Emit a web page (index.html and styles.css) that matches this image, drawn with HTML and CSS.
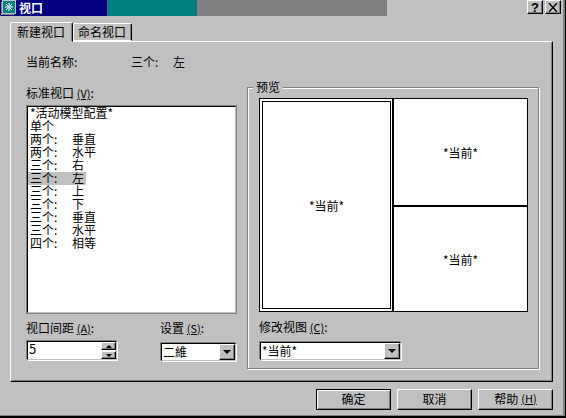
FILE: index.html
```html
<!DOCTYPE html>
<html lang="zh">
<head>
    <meta charset="UTF-8">
    <title>视口</title>
    <link rel="stylesheet" href="styles.css">
</head>
<body>
    <div id="dialog">
        <div class="titlebar">
            <div class="caption">
                <svg class="app-icon" width="16" height="16" viewBox="0 0 16 16">
                    <rect x="2.500" y="0.500" width="13" height="13" fill="#008080" stroke="#c0c0c0"/>
                    <path d="M1 2h1v12h12v1H1z" fill="#808080"/>
                    <path d="M9 3v8M5 7h8M6 4l2 2M12 4l-2 2M6 10l2-2M12 10l-2-2" stroke="#fff" fill="none"/>
                </svg>
                <span>视口</span>
            </div>
            <div class="band-teal"></div>
            <div class="band-grey"></div>
            <div class="sys-buttons">
                <div class="sys-btn">?</div>
                <div class="sys-btn">
                    <svg width="10" height="9" viewBox="0 0 10 9"><path d="M1 0l8 9M9 0L1 9" stroke="#000" stroke-width="1.300" fill="none"/></svg>
                </div>
            </div>
        </div>

        <div class="tabs">
            <div class="tab active">新建视口</div>
            <div class="tab">命名视口</div>
        </div>

        <div class="panel">
            <div class="name-row">
                <span class="name-label">当前名称:</span>
                <span class="k">三个:</span><span>左</span>
            </div>
            <div class="columns">
                <div class="left-col">
                    <div class="field-label">标准视口 <u>(V)</u>:</div>
                    <ul class="listbox">
                        <li>*活动模型配置*</li>
                        <li>单个</li>
                        <li><span class="k">两个:</span>垂直</li>
                        <li><span class="k">两个:</span>水平</li>
                        <li><span class="k">三个:</span>右</li>
                        <li class="selected"><span class="k">三个:</span>左</li>
                        <li><span class="k">三个:</span>上</li>
                        <li><span class="k">三个:</span>下</li>
                        <li><span class="k">三个:</span>垂直</li>
                        <li><span class="k">三个:</span>水平</li>
                        <li><span class="k">四个:</span>相等</li>
                    </ul>
                    <div class="bottom-fields">
                        <div class="spacing-field">
                            <div class="field-label">视口间距 <u>(A)</u>:</div>
                            <div class="spinner">
                                <span class="value">5</span>
                                <div class="spin-btns">
                                    <div class="spin-btn"><i class="arrow-up"></i></div>
                                    <div class="spin-btn"><i class="arrow-down"></i></div>
                                </div>
                            </div>
                        </div>
                        <div class="setting-field">
                            <div class="field-label">设置 <u>(S)</u>:</div>
                            <div class="combo combo-small">
                                <span class="value">二維</span>
                                <div class="drop-btn"><i class="arrow-big"></i></div>
                            </div>
                        </div>
                    </div>
                </div>

                <div class="group">
                    <div class="group-title">预览</div>
                    <div class="preview">
                        <div class="pane pane-main"><span>*当前*</span></div>
                        <div class="pane-stack">
                            <div class="pane pane-top"><span>*当前*</span></div>
                            <div class="pane"><span>*当前*</span></div>
                        </div>
                    </div>
                    <div class="field-label">修改视图 <u>(C)</u>:</div>
                    <div class="combo combo-wide">
                        <span class="value">*当前*</span>
                        <div class="drop-btn"><i class="arrow-big"></i></div>
                    </div>
                </div>
            </div>
        </div>

        <div class="actions">
            <div class="btn default">确定</div>
            <div class="btn">取消</div>
            <div class="btn">帮助 <u>(H)</u></div>
        </div>
    </div>
</body>
</html>
```

FILE: styles.css
```css
* {
    box-sizing: border-box;
}

html, body {
    margin: 0;
    height: 100%;
}

body {
    background-color: #c0c0c0;
    color: #000;
    font-family: "Noto Sans CJK SC", "Liberation Sans", sans-serif;
    font-size: 12px;
    line-height: 13px;
    overflow: hidden;
}

u {
    text-decoration: underline;
    font-size: 11px;
}

#dialog {
    width: 566px;
    height: 418px;
    border-right: 1px solid #000;
    border-bottom: 2px solid #000;
    box-shadow: inset -2px -1px 0 #808080;
}

/* title bar */
.titlebar {
    display: flex;
    height: 16px;
}

.caption {
    width: 107px;
    background-color: #000080;
    color: #fff;
    font-weight: bold;
    line-height: 16px;
    display: flex;
    align-items: flex-start;
    gap: 3px;
}

.band-teal {
    width: 90px;
    background-color: #008080;
}

.band-grey {
    width: 190px;
    background-color: #808080;
}

.sys-buttons {
    margin-left: 140px;
    display: flex;
    gap: 2px;
}

.sys-btn {
    width: 16px;
    height: 14px;
    background-color: #c0c0c0;
    border: 1px solid;
    border-color: #fff #000 #000 #fff;
    box-shadow: inset -1px -1px 0 #808080;
    display: flex;
    align-items: center;
    justify-content: center;
    font-family: "Liberation Sans", sans-serif;
    font-weight: bold;
    font-size: 13px;
}

/* tabs */
.tabs {
    display: flex;
    align-items: flex-end;
    height: 25px;
    padding-left: 10px;
    position: relative;
    z-index: 1;
}

.tab {
    height: 18px;
    width: 59px;
    padding: 1px 0 0 4px;
    background-color: #c0c0c0;
    border-top: 1px solid #fff;
    border-left: 1px solid #fff;
    border-right: 1px solid #000;
    border-bottom: 1px solid #fff;
    border-radius: 2px 2px 0 0;
    box-shadow: inset -1px 0 0 #808080;
    white-space: nowrap;
}

.tab.active {
    height: 20px;
    width: 63px;
    padding: 2px 0 0 6px;
    border-bottom: 1px solid #c0c0c0;
    margin-bottom: -1px;
}

/* panel */
.panel {
    margin-left: 10px;
    width: 543px;
    height: 341px;
    border: 1px solid;
    border-color: #fff #000 #000 #fff;
    box-shadow: inset -1px -1px 0 #808080;
    padding: 14px 0 0 15px;
}

.name-row {
    display: flex;
    height: 14px;
    line-height: 12px;
}

.name-label {
    width: 105px;
}

.k {
    display: inline-block;
    width: 42px;
}

.columns {
    display: flex;
    margin-top: 17px;
}

.left-col {
    width: 221px;
}

.field-label {
    height: 14px;
    line-height: 11px;
    white-space: nowrap;
}

.listbox {
    list-style: none;
    margin: 4px 0 0;
    padding: 0;
    width: 211px;
    height: 209px;
    background-color: #fff;
    border: 2px solid;
    border-color: #000 #c0c0c0 #c0c0c0 #000;
    outline: 1px solid #808080;
    outline-offset: -1px;
}

.listbox li {
    height: 13px;
    line-height: 12px;
    padding-left: 2px;
    white-space: nowrap;
}

.listbox .selected {
    width: 58px;
    background-color: #c0c0c0;
}

.bottom-fields {
    display: flex;
    margin-top: 8px;
}

.spacing-field {
    width: 134px;
}

.spinner {
    margin: 5px 0 0 1px;
    width: 90px;
    height: 19px;
    background-color: #fff;
    border: 1px solid;
    border-color: #000 #c0c0c0 #c0c0c0 #000;
    box-shadow: -1px -1px 0 #808080, 1px 1px 0 #fff;
    display: flex;
    justify-content: space-between;
    padding: 0 0 0 1px;
    line-height: 14px;
    font-size: 13px;
}

.spin-btns {
    width: 15px;
    display: flex;
    flex-direction: column;
    gap: 1px;
}

.spin-btn {
    flex: 1;
    background-color: #c0c0c0;
    border: 1px solid;
    border-color: #fff #000 #000 #fff;
    box-shadow: inset -1px -1px 0 #808080;
    display: flex;
    align-items: center;
    justify-content: center;
}

.arrow-up, .arrow-down {
    width: 0;
    height: 0;
    border-left: 3px solid transparent;
    border-right: 3px solid transparent;
}

.arrow-up {
    border-bottom: 3px solid #000;
}

.arrow-down {
    border-top: 3px solid #000;
}

.combo {
    margin: 7px 0 0 1px;
    height: 18px;
    background-color: #fff;
    border: 1px solid;
    border-color: #000 #c0c0c0 #c0c0c0 #000;
    box-shadow: -1px -1px 0 #808080, 1px 1px 0 #fff;
    display: flex;
    justify-content: space-between;
    align-items: stretch;
    padding-left: 1px;
    line-height: 16px;
}

.combo-small {
    width: 75px;
}

.combo-wide {
    width: 141px;
}

.drop-btn {
    width: 16px;
    background-color: #c0c0c0;
    border: 1px solid;
    border-color: #fff #000 #000 #fff;
    box-shadow: inset -1px -1px 0 #808080;
    display: flex;
    align-items: center;
    justify-content: center;
}

.arrow-big {
    width: 0;
    height: 0;
    border-left: 4px solid transparent;
    border-right: 4px solid transparent;
    border-top: 4px solid #000;
}

/* preview group */
.group {
    position: relative;
    width: 292px;
    height: 282px;
    border: 1px solid #808080;
    box-shadow: 1px 1px 0 #fff, inset 1px 1px 0 #fff;
    padding: 10px 0 0 11px;
}

.group-title {
    position: absolute;
    top: -7px;
    left: 5px;
    padding: 0 3px;
    line-height: 11px;
    background-color: #c0c0c0;
}

.preview {
    display: flex;
    width: 269px;
    height: 214px;
    background-color: #fff;
    border: 1px solid #000;
    margin-bottom: 9px;
}

.pane {
    flex: 1;
    display: flex;
    align-items: center;
    justify-content: center;
}

.pane-main {
    flex: none;
    width: 129px;
    margin: 2px 1px 2px 2px;
    border: 1px solid #000;
}

.pane-stack {
    flex: 1;
    display: flex;
    flex-direction: column;
    border-left: 2px solid #000;
}

.pane-top {
    flex: none;
    height: 108px;
    border-bottom: 2px solid #000;
}

/* bottom buttons */
.actions {
    display: flex;
    gap: 6px;
    margin-top: 7px;
    padding-left: 316px;
}

.btn {
    width: 75px;
    height: 21px;
    padding-bottom: 2px;
    border: 1px solid;
    border-color: #fff #000 #000 #fff;
    box-shadow: inset -1px -1px 0 #808080;
    display: flex;
    align-items: center;
    justify-content: center;
    gap: 3px;
}

.btn.default {
    border-color: #000;
    box-shadow: inset 1px 1px 0 #fff, inset -1px -1px 0 #808080;
}
```
